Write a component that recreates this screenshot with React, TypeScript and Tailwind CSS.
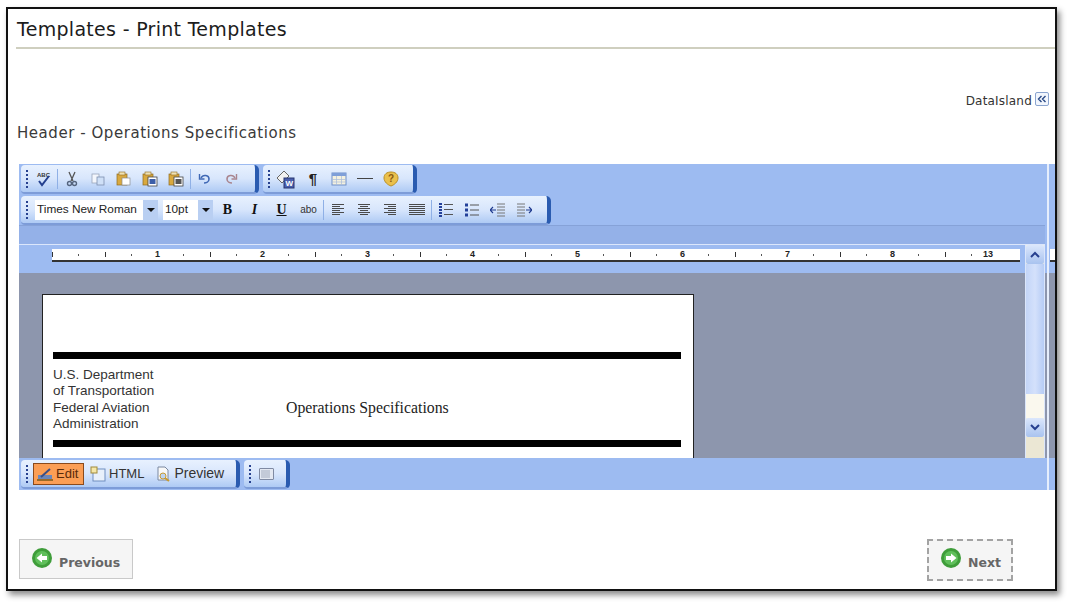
import type { ReactNode } from "react";

// small helpers for the editor chrome
function Grip() {
  return (
    <div className="flex h-[20px] w-[4px] flex-col justify-between py-[1px]">
      {[0, 1, 2, 3, 4].map((i) => (
        <span key={i} className="h-[2px] w-[2px] bg-[#27418f]" />
      ))}
    </div>
  );
}

function Sep() {
  return <span className="mx-[1px] h-[20px] w-[1px] shrink-0 bg-[#8fb0e6]" />;
}

function Tool({ children, w = "w-[26px]" }: { children: ReactNode; w?: string }) {
  return <div className={`flex h-[22px] shrink-0 items-center justify-center ${w}`}>{children}</div>;
}

function Bar({ children, className }: { children: ReactNode; className: string }) {
  return (
    <div
      className={`flex h-[29px] items-center rounded-l-[4px] rounded-r-[5px] border-r-[4px] border-b-[2px] border-r-[#2a5bb0] border-b-[#7d9cd8] bg-gradient-to-b from-[#e8f1fe] via-[#d8e6fc] to-[#aecaf4] ${className}`}
    >
      {children}
    </div>
  );
}

function Icon({ children, size = 16 }: { children: ReactNode; size?: number }) {
  return (
    <svg width={size} height={size} viewBox="0 0 16 16" fill="none">
      {children}
    </svg>
  );
}

function Lines({ rows }: { rows: [number, number][] }) {
  return (
    <Icon>
      {rows.map(([x, w], i) => (
        <rect key={i} x={x} y={2 + i * 2} width={w} height="1" fill="#4a4a4a" />
      ))}
    </Icon>
  );
}

function PasteIcon({ letter }: { letter?: string }) {
  return (
    <Icon>
      <rect x="1" y="3" width="10" height="11" fill="#d9a93f" stroke="#8f6a1e" strokeWidth="0.7" />
      <rect x="3" y="1" width="6" height="3" fill="#efe2b4" stroke="#8f6a1e" strokeWidth="0.6" />
      {letter ? (
        <>
          <rect x="6" y="6" width="9" height="9" fill="#fff" stroke="#444" strokeWidth="0.8" />
          <rect x="7.5" y="8" width="6" height="5" fill={letter === "W" ? "#3d5fa8" : "#555"} />
        </>
      ) : (
        <rect x="6" y="7" width="8" height="7" fill="#fff" stroke="#8c8c8c" strokeWidth="0.7" />
      )}
    </Icon>
  );
}

function Select({ label, w, textW }: { label: string; w: string; textW: string }) {
  return (
    <div className={`flex h-[20px] items-stretch bg-white ${w}`}>
      <span className={`flex items-center pl-[2px] text-[11.8px] text-[#222] ${textW}`}>{label}</span>
      <span className="flex w-[15px] items-center justify-center bg-[#b9cff2]">
        <span className="h-0 w-0 border-x-[4px] border-t-[4px] border-x-transparent border-t-[#111]" />
      </span>
    </div>
  );
}

function GreenArrow({ dir }: { dir: "left" | "right" }) {
  return (
    <svg width="22" height="22" viewBox="0 0 22 22">
      <circle cx="11" cy="11" r="10" fill="#3f9d3a" />
      <circle cx="11" cy="11" r="7" fill="#5fbf5a" />
      <path
        d={dir === "left" ? "M5.5 11 L11 6.5 V9 H16 V13 H11 V15.5 Z" : "M16.5 11 L11 6.5 V9 H6 V13 H11 V15.5 Z"}
        fill="#fff"
      />
    </svg>
  );
}

function Ruler() {
  const cells = Array.from({ length: 36 }, (_, i) => i);
  return (
    <div className="ml-[33px] mt-[4px] flex h-[13px] w-[968px] items-center border-b-[2px] border-b-[#333] bg-white font-['Liberation_Sans',sans-serif] text-[9px] font-bold text-[#222]">
      {cells.map((i) => (
        <div key={i} className="flex w-[26.25px] shrink-0 items-center justify-start">
          {i % 4 === 0 && i > 0 ? (
            <span className="-ml-[2px] leading-none">{i / 4}</span>
          ) : i % 2 === 0 ? (
            <span className="h-[5px] w-[1px] bg-[#333]" />
          ) : (
            <span className="h-[2px] w-[1px] bg-[#555]" />
          )}
        </div>
      ))}
      <span className="-ml-[14px] leading-none">13</span>
    </div>
  );
}

export default function App() {
  return (
    <div className="h-[603px] w-[1069px] overflow-hidden bg-white pl-[6px] pt-[7px]">
      <div className="flex h-[584px] w-[1051px] flex-col border-2 border-[#111] bg-white pl-[8px] font-['DejaVu_Sans',sans-serif] shadow-[3px_4px_6px_rgba(0,0,0,0.45)]">
        <div className="flex h-[40px] items-center border-b-2 border-b-[#cfcfbf] pl-[1px] pt-[2px] text-[19px] tracking-[0.3px] text-[#1c1c1c]">
          Templates - Print Templates
        </div>

        <div className="mt-[43px] flex items-center justify-end pr-[6px] text-[12px] leading-[16px] tracking-[0.2px] text-[#333]">
          DataIsland
          <span className="mb-[4px] ml-[3px] flex h-[14px] w-[14px] items-center justify-center rounded-[2px] border border-[#8aa4cf] bg-[#f2f6fd]">
            <svg width="10" height="8" viewBox="0 0 10 8" fill="none">
              <path d="M4.5 1 L1.5 4 L4.5 7 M8.5 1 L5.5 4 L8.5 7" stroke="#2a4a86" strokeWidth="1.4" />
            </svg>
          </span>
        </div>

        <div className="mt-[13px] pl-[1px] text-[15px] leading-[20px] tracking-[0.55px] text-[#3a3a3a]">
          Header - Operations Specifications
        </div>

        {/* editor */}
        <div className="ml-[3px] mt-[21px] flex h-[326px] flex-1 grow-0 basis-[326px] bg-[#9dbbf1] font-['Liberation_Sans',sans-serif]">
          <div className="flex w-[1028px] shrink-0 flex-col">
            <div className="flex h-[30px] gap-[4px] pl-[2px] pt-[1px]">
              <Bar className="w-[238px] pl-[5px]">
                <Grip />
                <Tool>
                  <Icon>
                    <text x="2" y="6" fontSize="6" fontWeight="700" fill="#333">ABC</text>
                    <path d="M4 10 L7 14 L14 5" stroke="#24408f" strokeWidth="2" />
                  </Icon>
                </Tool>
                <Sep />
                <Tool>
                  <Icon>
                    <path d="M5 1 L9 10 M11 1 L7 10" stroke="#555" strokeWidth="1.3" />
                    <circle cx="5.5" cy="12.5" r="2" stroke="#55657f" strokeWidth="1.4" />
                    <circle cx="10.5" cy="12.5" r="2" stroke="#55657f" strokeWidth="1.4" />
                  </Icon>
                </Tool>
                <Tool>
                  <Icon>
                    <rect x="2" y="3" width="7" height="9" fill="#f3f6fc" stroke="#9aa6bb" strokeWidth="0.8" />
                    <rect x="7" y="6" width="7" height="8" fill="#cfe0f7" stroke="#7d8fb0" strokeWidth="0.8" />
                  </Icon>
                </Tool>
                <Tool><PasteIcon /></Tool>
                <Tool><PasteIcon letter="W" /></Tool>
                <Tool><PasteIcon letter="T" /></Tool>
                <Sep />
                <Tool>
                  <Icon>
                    <path d="M4 7 C6 3 12 4 12 8 C12 11 9 12 7 12" stroke="#3f68b5" strokeWidth="1.6" />
                    <path d="M2.5 3 V8 H7.5" stroke="#3f68b5" strokeWidth="1.4" />
                  </Icon>
                </Tool>
                <Tool>
                  <Icon>
                    <path d="M12 7 C10 3 4 4 4 8 C4 11 7 12 9 12" stroke="#a9858f" strokeWidth="1.6" />
                    <path d="M13.5 3 V8 H8.5" stroke="#a9858f" strokeWidth="1.4" />
                  </Icon>
                </Tool>
              </Bar>
              <Bar className="w-[154px] pl-[5px]">
                <Grip />
                <Tool w="w-[28px]">
                  <svg width="20" height="20" viewBox="0 0 20 20" fill="none">
                    <path d="M1 9 L8 2 L13 7 L6 14 Z" fill="#f1f1f1" stroke="#666" />
                    <rect x="8" y="9" width="10" height="10" fill="#4a5fae" stroke="#27346e" />
                    <text x="9.5" y="17" fontSize="8" fontWeight="700" fill="#fff">W</text>
                  </svg>
                </Tool>
                <Tool>
                  <span className="text-[15px] font-bold leading-none text-[#222]">¶</span>
                </Tool>
                <Tool>
                  <Icon>
                    <rect x="1" y="2" width="14" height="12" fill="#f4f1df" stroke="#6f8fc9" />
                    <rect x="1" y="2" width="14" height="3" fill="#7f9fd8" />
                    <path d="M1 8.5 H15 M1 11 H15 M5.5 5 V14 M10.5 5 V14" stroke="#a9bbdb" strokeWidth="0.7" />
                  </Icon>
                </Tool>
                <Tool>
                  <span className="h-[1.5px] w-[16px] bg-[#444]" />
                </Tool>
                <Tool>
                  <Icon>
                    <path d="M8 1 C12 1 15 3 15 7 C15 11 11 14 8 15 C5 14 1 11 1 7 C1 3 4 1 8 1 Z" fill="#eac04c" stroke="#b98f26" />
                    <text x="5" y="11" fontSize="10" fontWeight="700" fill="#8a5a12">?</text>
                  </Icon>
                </Tool>
              </Bar>
            </div>

            <div className="mt-[2px] h-[29px] pl-[2px]">
              <Bar className="w-[530px] pl-[5px]">
                <Grip />
                <div className="ml-[5px] flex items-center gap-[5px]">
                  <Select label="Times New Roman" w="w-[123px]" textW="w-[108px]" />
                  <Select label="10pt" w="w-[50px]" textW="w-[35px]" />
                </div>
                <div className="ml-[1px] flex items-center">
                  <Tool w="w-[27px]">
                    <span className="font-['Liberation_Serif',serif] text-[14px] font-bold text-[#111]">B</span>
                  </Tool>
                  <Tool w="w-[27px]">
                    <span className="font-['Liberation_Serif',serif] text-[14px] font-bold italic text-[#111]">I</span>
                  </Tool>
                  <Tool w="w-[27px]">
                    <span className="font-['Liberation_Serif',serif] text-[14px] font-bold text-[#111] underline">U</span>
                  </Tool>
                  <Tool w="w-[27px]">
                    <span className="text-[10px] text-[#333]">abo</span>
                  </Tool>
                  <Sep />
                  <Tool w="w-[26px]"><Lines rows={[[2, 12], [2, 8], [2, 12], [2, 8], [2, 12], [2, 8]]} /></Tool>
                  <Tool w="w-[26px]"><Lines rows={[[2, 12], [4, 8], [2, 12], [4, 8], [2, 12], [4, 8]]} /></Tool>
                  <Tool w="w-[26px]"><Lines rows={[[2, 12], [6, 8], [2, 12], [6, 8], [2, 12], [6, 8]]} /></Tool>
                  <Tool w="w-[27px]"><Lines rows={[[0, 16], [0, 16], [0, 16], [0, 16], [0, 16], [0, 16]]} /></Tool>
                  <Sep />
                  <Tool>
                    <Icon>
                      <path d="M2.5 1 V15" stroke="#23409a" strokeWidth="3" strokeDasharray="2 1" />
                      <path d="M6 2.5 H15 M6 7.5 H15 M6 12.5 H15" stroke="#555" strokeWidth="1.2" />
                    </Icon>
                  </Tool>
                  <Tool>
                    <Icon>
                      <rect x="1" y="1.5" width="3" height="3" fill="#23409a" />
                      <rect x="1" y="6.5" width="3" height="3" fill="#23409a" />
                      <rect x="1" y="11.5" width="3" height="3" fill="#23409a" />
                      <path d="M6 3 H15 M6 8 H15 M6 13 H15" stroke="#555" strokeWidth="1.2" />
                    </Icon>
                  </Tool>
                  <Tool>
                    <Icon>
                      <path d="M7 2 H15 M7 5 H15 M7 8 H15 M7 11 H15 M7 14 H15" stroke="#777" />
                      <path d="M0 8 H6 M3 5 L0 8 L3 11" stroke="#1f3a8f" strokeWidth="1.2" />
                    </Icon>
                  </Tool>
                  <Tool>
                    <Icon>
                      <path d="M1 2 H9 M1 5 H9 M1 8 H9 M1 11 H9 M1 14 H9" stroke="#777" />
                      <path d="M10 8 H16 M13 5 L16 8 L13 11" stroke="#1f3a8f" strokeWidth="1.2" />
                    </Icon>
                  </Tool>
                </div>
              </Bar>
            </div>

            <div className="h-[20px] w-[1026px] border-y border-t-[#86a2d8] border-b-[#dbe6fb] bg-[#94b1e8]" />

            <div className="flex min-h-0 flex-1">
              <div className="flex w-[1006px] flex-col">
                <div className="h-[28px] shrink-0">
                  <Ruler />
                </div>
                <div className="flex-1 overflow-hidden bg-[#8d96ad] pl-[23px] pt-[21px]">
                  <div className="flex h-[170px] w-[652px] flex-col border border-[#222] bg-white pl-[10px] pr-[12px] pt-[57px]">
                    <div className="h-[7px] bg-black" />
                    <div className="mt-[8px] flex">
                      <div className="w-[233px] text-[13.5px] leading-[16.3px] text-[#333]">
                        <div>U.S. Department</div>
                        <div>of Transportation</div>
                        <div>Federal Aviation</div>
                        <div>Administration</div>
                      </div>
                      <div className="mt-[32px] font-['Liberation_Serif',serif] text-[15.8px] leading-[18px] text-[#222]">
                        Operations Specifications
                      </div>
                    </div>
                    <div className="mt-[8px] h-[7px] bg-black" />
                  </div>
                </div>
              </div>

              {/* scrollbar */}
              <div className="flex w-[20px] shrink-0 flex-col border-x border-x-[#dbe6fb] bg-[#f3efdf]">
                <div className="flex h-[19px] items-center justify-center rounded-[2px] bg-gradient-to-b from-[#dbe7fc] to-[#a9c3ef] text-[#27408f]">
                  <svg width="10" height="7" viewBox="0 0 10 7"><path d="M1 6 L5 2 L9 6" stroke="#27408f" strokeWidth="2" fill="none" /></svg>
                </div>
                <div className="h-[130px] bg-gradient-to-r from-[#c3d5f8] via-[#d4e1fb] to-[#b6ccf5]" />
                <div className="h-[24px] bg-[#faf8ee]" />
                <div className="flex h-[19px] items-center justify-center rounded-[2px] bg-gradient-to-b from-[#dbe7fc] to-[#a9c3ef]">
                  <svg width="10" height="7" viewBox="0 0 10 7"><path d="M1 1 L5 5 L9 1" stroke="#27408f" strokeWidth="2" fill="none" /></svg>
                </div>
                <div className="flex-1 bg-[#ebe7d4]" />
              </div>
              <div className="flex flex-1 flex-col">
                <div className="h-[28px] shrink-0" />
                <div className="flex-1 bg-[#8d96ad]" />
              </div>
            </div>

            <div className="flex h-[32px] shrink-0 gap-[4px] pl-[2px] pt-[2px]">
              <Bar className="h-[26px] w-[219px] pl-[5px] text-[14px] text-[#333]">
                <Grip />
                <div className="ml-[3px] flex h-[22px] w-[51px] items-center gap-[3px] border border-[#8a4a1c] bg-[#fb9e55] pl-[3px] text-[13px] text-[#5a2a0a]">
                  <Icon>
                    <rect x="1" y="9" width="14" height="4" fill="#6c86b8" />
                    <path d="M4 11 L13 3" stroke="#3a4f86" strokeWidth="2" />
                    <path d="M0 14 H16" stroke="#7a5a1a" strokeWidth="1.5" />
                  </Icon>
                  Edit
                </div>
                <div className="ml-[6px] flex items-center gap-[3px] text-[13px]">
                  <Icon>
                    <rect x="3" y="3" width="12" height="12" fill="#e8f0fb" stroke="#6f8ebf" />
                    <rect x="1" y="1" width="6" height="6" fill="#f5e7a8" stroke="#a08a3a" />
                  </Icon>
                  HTML
                </div>
                <div className="ml-[11px] flex items-center gap-[3px]">
                  <Icon>
                    <path d="M3 1 H10 L13 4 V14 H3 Z" fill="#f8f8f8" stroke="#7a88a0" />
                    <circle cx="8" cy="10" r="3" fill="#bcd3f0" stroke="#c79a32" />
                    <path d="M10 12 L14 15" stroke="#c79a32" strokeWidth="2" />
                  </Icon>
                  Preview
                </div>
              </Bar>
              <Bar className="h-[26px] w-[46px] pl-[5px]">
                <Grip />
                <div className="ml-[6px] h-[12px] w-[15px] rounded-[1px] border border-[#7f8aa3] bg-[#e3e8f2] p-[1px]">
                  <div className="h-full w-[9px] bg-[#c3cad8]" />
                </div>
              </Bar>
            </div>
          </div>

          <div className="w-[2px] shrink-0 bg-[#e6eefc]" />

          {/* sliver of the next editor pane, cut off by the frame */}
          <div className="flex flex-1 flex-col">
            <div className="h-[81px] shrink-0" />
            <div className="h-[28px] shrink-0 pt-[4px]">
              <div className="ml-[1px] h-[13px] border-b-[2px] border-b-[#333] bg-white" />
            </div>
            <div className="flex-1 bg-[#8d96ad]" />
            <div className="h-[32px] shrink-0" />
          </div>
        </div>

        {/* wizard buttons */}
        <div className="mt-[49px] flex items-start justify-between pl-[3px] pr-[42px] text-[12.5px] font-bold text-[#666]">
          <div className="flex h-[40px] w-[114px] gap-[6px] border border-[#c9c9c9] bg-[#f5f5f5] pl-[11px] pt-[7px]">
            <GreenArrow dir="left" />
            <span className="mt-[7px]">Previous</span>
          </div>
          <div className="flex h-[42px] w-[86px] gap-[6px] border-2 border-dashed border-[#a3a3a3] bg-[#f5f5f5] pl-[11px] pt-[6px]">
            <GreenArrow dir="right" />
            <span className="mt-[7px]">Next</span>
          </div>
        </div>
      </div>
    </div>
  );
}
